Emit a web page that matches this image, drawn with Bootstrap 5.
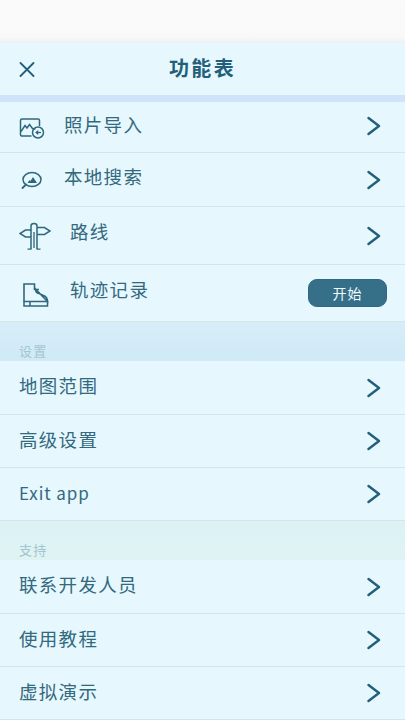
<!DOCTYPE html>
<html lang="zh">
<head>
<meta charset="utf-8">
<title>功能表</title>
<link href="https://cdn.jsdelivr.net/npm/bootstrap@5.3.0/dist/css/bootstrap.min.css" rel="stylesheet">
<style>
html,body{height:720px;overflow:hidden}
body{background:#e6f7fe;color:#33697d;font-family:"Noto Sans CJK SC","Noto Sans",sans-serif;font-size:18.5px;letter-spacing:1.300px}
.topgap{height:43px;background:linear-gradient(#fafafa,#f9f9f9 85%,#eff0f0)}
.head{height:52px;position:relative;color:#22607a}
.head h1{font-size:20px;font-weight:700;margin:0;letter-spacing:2.300px;position:relative;top:-1px}
.head svg{position:absolute;left:19px;top:19px}
.strip{height:7px;background:#cfe4fb}
.mrow{border-bottom:1px solid #d3e6ee;padding:0 24px 0 19px;background:#e6f7fe}
.h51{height:51px}.h53{height:53px}.h54{height:54px}.h58{height:58px}.h57{height:57px}
.ico{flex:0 0 auto}
.ic45{width:45px}.ic51{width:51px}
.lbl{position:relative;top:-3px;line-height:1.2}
.up3{top:-4px}
.up1{top:-2px}
.latin{font-size:17px;letter-spacing:.9px;top:-1px}
.chev{position:relative;top:-1px}
.sect{height:39px;padding:0 19px 1px;font-size:13px;letter-spacing:1.200px;line-height:18px;color:#a3c5cf;background:linear-gradient(#d7eef9,#d0e9f7)}
.sect2{background:linear-gradient(#dcf2f4,#dff3f3)}
.startbtn{width:79px;height:28px;border-radius:9px;background:#366f88;color:#f1fafd;font-size:14px;padding:0;border:1px solid #2f6880;margin-right:-6px;letter-spacing:1px;line-height:1}
.startbtn:hover{background:#366f88;color:#f1fafd}
</style>
</head>
<body>
<div class="topgap"></div>
<div class="head d-flex align-items-center justify-content-center">
<svg width="16" height="15" viewBox="0 0 16 15" fill="none" stroke="#22607a" stroke-width="1.8" stroke-linecap="round"><path d="M1.500 1 14.500 14M14.500 1 1.500 14"/></svg>
<h1>功能表</h1>
</div>
<div class="strip"></div>

<div class="mrow h51 d-flex align-items-center">
<div class="ico ic45"><svg class="chev" width="26" height="21" viewBox="0 0 26 21" fill="none" stroke="#2f687c" stroke-width="1.500"><path d="M12.500 18H2.500A1.500 1.500 0 0 1 1.500 16.500V2.500A1.500 1.500 0 0 1 3 1h16a1.500 1.500 0 0 1 1.500 1.500V8"/><path d="M2 13.500 6 7.500l2 2.500 2.500-3.500 3 4 3 .5"/><circle cx="19" cy="14.500" r="5.500"/><path d="M22 14.500h-4.500" stroke-width="1.300"/><path d="M19 12.500 16.500 14.500 19 16.500z" fill="#2f687c" stroke-width=".6"/></svg></div>
<span class="lbl flex-grow-1">照片导入</span>
<svg class="chev" width="14" height="20" viewBox="0 0 14 20" fill="none" stroke="#22607a" stroke-width="2.400" stroke-linecap="round" stroke-linejoin="round"><path d="M1.500 2 12 10 1.500 18"/></svg>
</div>

<div class="mrow h54 d-flex align-items-center">
<div class="ico ic45"><svg class="chev" width="24" height="19" viewBox="0 0 24 19" fill="none" stroke="#2f687c" stroke-width="1.500"><ellipse cx="13" cy="8.500" rx="9" ry="7"/><path d="M7 13.500 3.500 17" stroke-linecap="round" stroke-width="1.800"/><path d="M8.500 12 10.500 9 11.500 10 14 6 18 12z" fill="#2f687c" stroke="none"/></svg></div>
<span class="lbl flex-grow-1">本地搜索</span>
<svg width="14" height="20" viewBox="0 0 14 20" fill="none" stroke="#22607a" stroke-width="2.400" stroke-linecap="round" stroke-linejoin="round"><path d="M1.500 2 12 10 1.500 18"/></svg>
</div>

<div class="mrow h58 d-flex align-items-center">
<div class="ico ic51"><svg width="32" height="28" viewBox="0 0 32 28" fill="none" stroke="#2f687c" stroke-width="1.500"><path d="M18 5.500h7.500L31 9l-5.500 3.500H18"/><path d="M12 8H6.500L1 11.500 6.500 15H12"/><path d="M12 27V4Q12 1.500 15 1.500T18 4V27"/><path d="M8.500 27.200h4M17.500 27.200h4M15 10V26" stroke-width="1.300"/></svg></div>
<span class="lbl up3 flex-grow-1">路线</span>
<svg width="14" height="20" viewBox="0 0 14 20" fill="none" stroke="#22607a" stroke-width="2.400" stroke-linecap="round" stroke-linejoin="round"><path d="M1.500 2 12 10 1.500 18"/></svg>
</div>

<div class="mrow h57 d-flex align-items-center">
<div class="ico ic51"><svg class="ms-1" width="26" height="24" viewBox="0 0 26 24" fill="none" stroke="#2f687c" stroke-width="1.600"><path d="M1 18.500V1h10.500v6"/><path d="M11.500 5 13.500 9.500l7 3c3 1.200 4 2.800 4 6z"/><path d="M1 18.500h23.500v4.500H1zM13 6.500h3M14 10h3M7 18.500v4.500" stroke-width="1.500"/></svg></div>
<span class="lbl up3 flex-grow-1">轨迹记录</span>
<button type="button" class="btn startbtn">开始</button>
</div>

<div class="sect d-flex align-items-end">设置</div>

<div class="mrow h54 d-flex align-items-center">
<span class="lbl up1 flex-grow-1">地图范围</span>
<svg width="14" height="20" viewBox="0 0 14 20" fill="none" stroke="#22607a" stroke-width="2.400" stroke-linecap="round" stroke-linejoin="round"><path d="M1.500 2 12 10 1.500 18"/></svg>
</div>
<div class="mrow h53 d-flex align-items-center">
<span class="lbl up1 flex-grow-1">高级设置</span>
<svg width="14" height="20" viewBox="0 0 14 20" fill="none" stroke="#22607a" stroke-width="2.400" stroke-linecap="round" stroke-linejoin="round"><path d="M1.500 2 12 10 1.500 18"/></svg>
</div>
<div class="mrow h53 d-flex align-items-center">
<span class="lbl latin flex-grow-1">Exit app</span>
<svg width="14" height="20" viewBox="0 0 14 20" fill="none" stroke="#22607a" stroke-width="2.400" stroke-linecap="round" stroke-linejoin="round"><path d="M1.500 2 12 10 1.500 18"/></svg>
</div>

<div class="sect sect2 d-flex align-items-end">支持</div>

<div class="mrow h54 d-flex align-items-center">
<span class="lbl up1 flex-grow-1">联系开发人员</span>
<svg width="14" height="20" viewBox="0 0 14 20" fill="none" stroke="#22607a" stroke-width="2.400" stroke-linecap="round" stroke-linejoin="round"><path d="M1.500 2 12 10 1.500 18"/></svg>
</div>
<div class="mrow h53 d-flex align-items-center">
<span class="lbl up1 flex-grow-1">使用教程</span>
<svg width="14" height="20" viewBox="0 0 14 20" fill="none" stroke="#22607a" stroke-width="2.400" stroke-linecap="round" stroke-linejoin="round"><path d="M1.500 2 12 10 1.500 18"/></svg>
</div>
<div class="mrow h53 d-flex align-items-center">
<span class="lbl up1 flex-grow-1">虚拟演示</span>
<svg width="14" height="20" viewBox="0 0 14 20" fill="none" stroke="#22607a" stroke-width="2.400" stroke-linecap="round" stroke-linejoin="round"><path d="M1.500 2 12 10 1.500 18"/></svg>
</div>
<script src="https://cdn.jsdelivr.net/npm/bootstrap@5.3.0/dist/js/bootstrap.bundle.min.js"></script>
</body>
</html>
